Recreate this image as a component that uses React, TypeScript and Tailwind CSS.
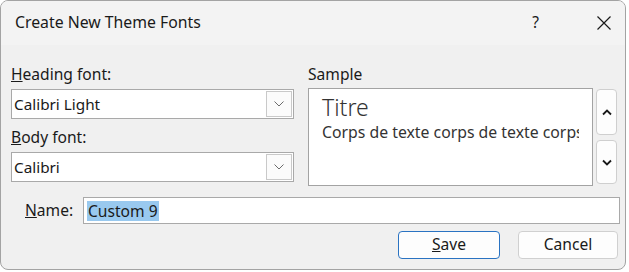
// Create New Theme Fonts dialog, Windows 11 style.

const font = { fontFamily: '"Noto Sans", "Open Sans", sans-serif' };

function ThinChevron() {
  return (
    <svg width="10" height="6" viewBox="0 0 10 6" fill="none">
      <path d="M0.5 0.5 L5 5 L9.5 0.5" stroke="#6b6b6b" strokeWidth="1" />
    </svg>
  );
}

function BoldChevron({ up }: { up?: boolean }) {
  return (
    <svg width="10" height="7" viewBox="0 0 10 7" fill="none">
      <path
        d={up ? "M1 5.5 L5 1.5 L9 5.5" : "M1 1.5 L5 5.5 L9 1.5"}
        stroke="#1a1a1a"
        strokeWidth="1.8"
      />
    </svg>
  );
}

function Combo({ value }: { value: string }) {
  return (
    <div className="flex h-[30px] w-[283px] items-center border border-[#a9a9a9] bg-white pr-[1px]">
      <span className="flex-1 pl-[2px] text-[15.3px] text-[#1a1a1a]">{value}</span>
      <div className="flex h-[26px] w-[26px] items-center justify-center border border-[#c9c9c9] bg-[#fbfbfb]">
        <ThinChevron />
      </div>
    </div>
  );
}

export default function App() {
  return (
    <div className="h-[272px] w-[629px] bg-white" style={font}>
      <div className="flex h-[270px] w-[626px] flex-col overflow-hidden rounded-[8px] border border-[#a3a3a3] bg-[#f0f0f0] text-[#1a1a1a]">
        {/* Title bar */}
        <div className="flex h-[44px] items-center bg-[#f3f3f3] pl-[14px]">
          <span className="flex-1 text-[15.8px]">Create New Theme Fonts</span>
          <span className="mr-[58px] text-[15.5px]">?</span>
          <svg className="mr-[14px]" width="14" height="14" viewBox="0 0 14 14" fill="none">
            <path d="M0.5 0.5 L13.5 13.5 M13.5 0.5 L0.5 13.5" stroke="#1a1a1a" strokeWidth="1.2" />
          </svg>
        </div>

        {/* Body */}
        <div className="flex flex-col pl-[10px] pt-[19px]">
          <div className="flex">
            <div className="flex w-[283px] flex-col">
              <span className="h-[20px] text-[15.6px] leading-[20px]">
                <u>H</u>eading font:
              </span>
              <div className="mt-[5px]">
                <Combo value="Calibri Light" />
              </div>
              <span className="mt-[8px] h-[20px] text-[15.6px] leading-[20px]">
                <u>B</u>ody font:
              </span>
              <div className="mt-[5px]">
                <Combo value="Calibri" />
              </div>
            </div>

            <div className="ml-[14px] flex flex-col">
              <span className="h-[20px] text-[15.6px] leading-[20px]">Sample</span>
              <div className="mt-[4px] flex">
                <div className="h-[98px] w-[285px] overflow-hidden whitespace-nowrap border border-[#a3a3a3] bg-white pl-[13px] pt-[3px]">
                  <div className="text-[23px] font-light leading-[30px] text-[#333]">Titre</div>
                  <div className="w-[257px] overflow-hidden text-[15.8px] leading-[20px] text-[#333]">
                    Corps de texte corps de texte corps
                  </div>
                </div>
                <div className="ml-[3px] flex flex-col pt-[1px]">
                  <div className="flex h-[46px] w-[21px] items-center justify-center rounded-[4px] border border-[#cfcfcf] bg-[#fdfdfd]">
                    <BoldChevron up />
                  </div>
                  <div className="mt-[5px] flex h-[44px] w-[21px] items-center justify-center rounded-[4px] border border-[#cfcfcf] bg-[#fdfdfd]">
                    <BoldChevron />
                  </div>
                </div>
              </div>
            </div>
          </div>

          {/* Name row */}
          <div className="mt-[11px] flex items-center">
            <span className="ml-[14px] w-[58px] text-[15.6px]">
              <u>N</u>ame:
            </span>
            <div className="flex h-[27px] w-[537px] items-center border border-[#a9a9a9] bg-white pl-[3px]">
              <span className="bg-[#99c9ef] px-[1px] text-[15.6px] leading-[20px]">Custom 9</span>
            </div>
          </div>

          {/* Buttons */}
          <div className="mt-[7px] flex justify-end gap-[18px] pr-[7px]">
            <button className="h-[28px] w-[102px] rounded-[4px] border border-[#2a73c2] bg-[#fdfdfd] text-[15.6px]">
              <u>S</u>ave
            </button>
            <button className="h-[28px] w-[100px] rounded-[4px] border border-[#d0d0d0] bg-[#fdfdfd] text-[15.6px]">
              Cancel
            </button>
          </div>
        </div>
      </div>
    </div>
  );
}
